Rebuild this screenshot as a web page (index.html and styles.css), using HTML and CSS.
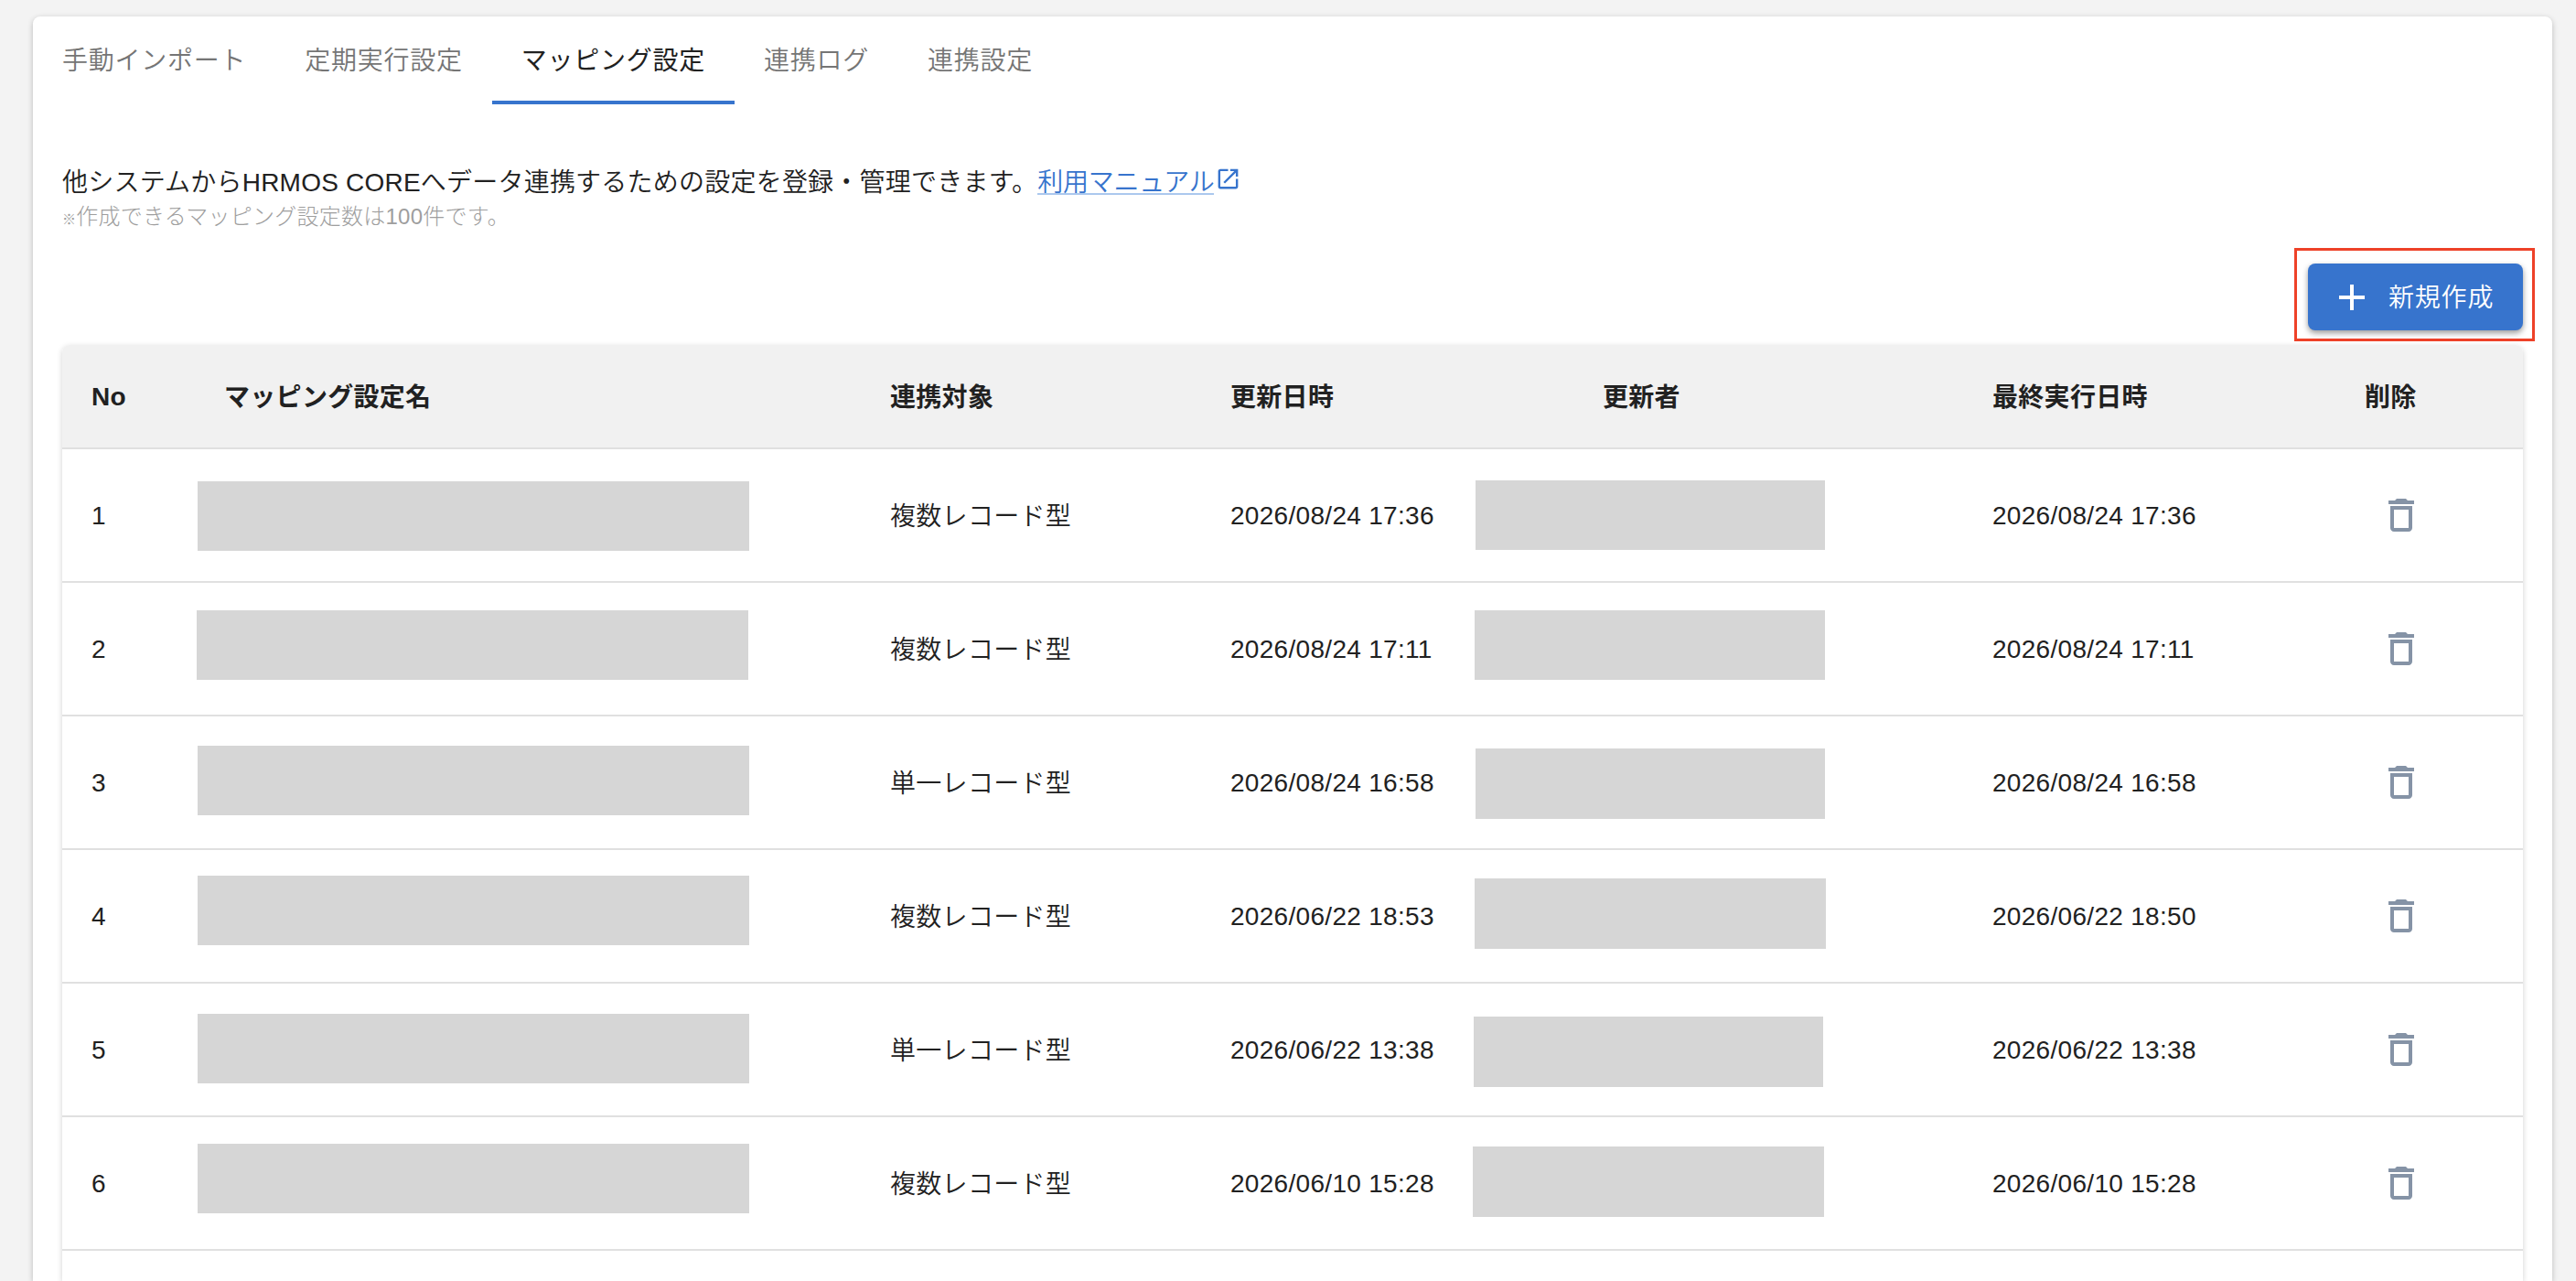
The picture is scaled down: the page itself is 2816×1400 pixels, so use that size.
FILE: index.html
```html
<!DOCTYPE html>
<html lang="ja">
<head>
    <meta charset="UTF-8">
    <meta name="viewport" content="width=device-width, initial-scale=1.0">
    <title>マッピング設定</title>
    <link rel="stylesheet" href="styles.css">
</head>
<body>

    <!-- shared icon shapes -->
    <svg class="icon-defs" width="0" height="0">
        <symbol id="icon-trash" viewBox="0 0 24 24">
            <path d="M6 19c0 1.1.9 2 2 2h8c1.1 0 2-.9 2-2V7H6v12zM8 9h8v10H8V9zm7.5-5l-1-1h-5l-1 1H5v2h14V4z"/>
        </symbol>
    </svg>

    <main class="card">
        <nav class="tabs">
            <a class="tab">手動インポート</a>
            <a class="tab">定期実行設定</a>
            <a class="tab active">マッピング設定</a>
            <a class="tab">連携ログ</a>
            <a class="tab">連携設定</a>
        </nav>

        <div class="content">
            <div class="description">
                <span>他システムからHRMOS COREへデータ連携するための設定を登録・管理できます。</span>
                <a class="manual-link">利用マニュアル</a>
                <svg class="icon-open" viewBox="0 0 24 24">
                    <path d="M19 19H5V5h7V3H5c-1.11 0-2 .9-2 2v14c0 1.1.89 2 2 2h14c1.1 0 2-.9 2-2v-7h-2v7zM14 3v2h3.59l-9.83 9.83 1.41 1.41L19 6.41V10h2V3h-7z"/>
                </svg>
            </div>
            <p class="note"><span class="note-mark">※</span>作成できるマッピング設定数は100件です。</p>

            <div class="actions">
                <div class="highlight">
                    <button class="create-button" type="button">
                        <svg class="icon-plus" viewBox="0 0 24 24">
                            <path d="M19 13h-6v6h-2v-6H5v-2h6V5h2v6h6v2z"/>
                        </svg>
                        <span class="create-label">新規作成</span>
                    </button>
                </div>
            </div>

            <div class="table">
                <div class="row head">
                    <div class="cell num">No</div>
                    <div class="cell title">マッピング設定名</div>
                    <div class="cell">連携対象</div>
                    <div class="cell">更新日時</div>
                    <div class="cell user">更新者</div>
                    <div class="cell">最終実行日時</div>
                    <div class="cell">削除</div>
                </div>
                <div class="row r1">
                    <div class="cell num">1</div>
                    <div class="mask name"></div>
                    <div class="cell">複数レコード型</div>
                    <div class="cell num">2026/08/24 17:36</div>
                    <div class="mask user-mask"></div>
                    <div class="cell num">2026/08/24 17:36</div>
                    <div class="cell delete"><svg class="icon-trash"><use href="#icon-trash"/></svg></div>
                </div>
                <div class="row r2">
                    <div class="cell num">2</div>
                    <div class="mask name"></div>
                    <div class="cell">複数レコード型</div>
                    <div class="cell num">2026/08/24 17:11</div>
                    <div class="mask user-mask"></div>
                    <div class="cell num">2026/08/24 17:11</div>
                    <div class="cell delete"><svg class="icon-trash"><use href="#icon-trash"/></svg></div>
                </div>
                <div class="row r3">
                    <div class="cell num">3</div>
                    <div class="mask name"></div>
                    <div class="cell">単一レコード型</div>
                    <div class="cell num">2026/08/24 16:58</div>
                    <div class="mask user-mask"></div>
                    <div class="cell num">2026/08/24 16:58</div>
                    <div class="cell delete"><svg class="icon-trash"><use href="#icon-trash"/></svg></div>
                </div>
                <div class="row r4">
                    <div class="cell num">4</div>
                    <div class="mask name"></div>
                    <div class="cell">複数レコード型</div>
                    <div class="cell num">2026/06/22 18:53</div>
                    <div class="mask user-mask"></div>
                    <div class="cell num">2026/06/22 18:50</div>
                    <div class="cell delete"><svg class="icon-trash"><use href="#icon-trash"/></svg></div>
                </div>
                <div class="row r5">
                    <div class="cell num">5</div>
                    <div class="mask name"></div>
                    <div class="cell">単一レコード型</div>
                    <div class="cell num">2026/06/22 13:38</div>
                    <div class="mask user-mask"></div>
                    <div class="cell num">2026/06/22 13:38</div>
                    <div class="cell delete"><svg class="icon-trash"><use href="#icon-trash"/></svg></div>
                </div>
                <div class="row r6">
                    <div class="cell num">6</div>
                    <div class="mask name"></div>
                    <div class="cell">複数レコード型</div>
                    <div class="cell num">2026/06/10 15:28</div>
                    <div class="mask user-mask"></div>
                    <div class="cell num">2026/06/10 15:28</div>
                    <div class="cell delete"><svg class="icon-trash"><use href="#icon-trash"/></svg></div>
                </div>
                <div class="row last"></div>
            </div>
        </div>
    </main>

</body>
</html>
```

FILE: styles.css
```css
* {
    box-sizing: border-box;
}

body {
    margin: 0;
    padding: 18px 26px 0 36px;
    height: 100vh;
    overflow: hidden;
    background-color: #f3f3f3;
    font-family: "Liberation Sans", "Noto Sans CJK JP", sans-serif;
    font-size: 28px;
    letter-spacing: 0.3px;
    color: #212121;
}

.icon-defs {
    display: none;
}

.card {
    height: calc(100vh - 18px);
    background-color: #fff;
    border-radius: 8px 8px 0 0;
    box-shadow: 0 2px 6px rgba(0, 0, 0, 0.24);
}

/* Tabs */
.tabs {
    display: flex;
    height: 96px;
}

.tab {
    padding: 29px 32px 0;
    line-height: 40px;
    font-weight: 350;
    letter-spacing: 0.75px;
    color: #757575;
    border-bottom: 4px solid transparent;
}

.tab.active {
    font-weight: 400;
    color: #212121;
    border-bottom-color: #3774cd;
}

/* Description */
.content {
    padding: 64px 32px 0;
}

.description {
    display: flex;
    height: 40px;
    padding-top: 2px;
    line-height: 40px;
    font-weight: 350;
    letter-spacing: 0.22px;
    white-space: nowrap;
}

.manual-link {
    height: 33px;
    color: #3774cd;
    letter-spacing: -0.28px;
    border-bottom: 2px solid #abc8ee;
}

.icon-open {
    width: 29px;
    height: 29px;
    margin-top: 1px;
    margin-left: 1px;
    fill: #3774cd;
}

.note {
    margin: 0;
    height: 38px;
    line-height: 38px;
    font-size: 24px;
    font-weight: 300;
    letter-spacing: 0.26px;
    color: #9e9e9e;
}

.note-mark {
    font-size: 15px;
}

/* Create button */
.actions {
    display: flex;
    justify-content: flex-end;
    margin: 15px -13px 4px 0;
}

.highlight {
    border: 3px solid #ee4128;
    padding: 14px 10px 9px 12px;
}

.create-button {
    display: flex;
    align-items: center;
    width: 235px;
    height: 73px;
    padding: 0 0 0 24px;
    border: none;
    border-radius: 8px;
    background-color: #3774cd;
    color: #fff;
    font-family: inherit;
    font-size: 28px;
    font-weight: 350;
    letter-spacing: 0.8px;
    box-shadow: 0 3px 6px rgba(0, 0, 0, 0.4);
}

.create-label {
    padding-bottom: 4px;
}

.icon-plus {
    width: 48px;
    height: 48px;
    margin-right: 16px;
    fill: #fff;
}

/* Table */
.table {
    border-radius: 8px 8px 0 0;
    box-shadow: 0 2px 6px rgba(0, 0, 0, 0.18);
}

.row {
    display: grid;
    grid-template-columns: 147px 726px 372px 296px 537px 407px 205px;
    align-items: center;
    height: 146px;
    border-bottom: 2px solid #e0e0e0;
}

.row.head {
    height: 114px;
    background-color: #f1f1f1;
    border-radius: 8px 8px 0 0;
}

.row.last {
    height: 33px;
    border-bottom: none;
}

.cell {
    padding-left: 32px;
    padding-bottom: 3px;
    font-weight: 350;
    white-space: nowrap;
}

.cell.num {
    padding-top: 2px;
    padding-bottom: 0;
}

.head .cell {
    font-weight: 700;
}

.cell.title {
    padding-left: 30px;
}

.cell.user {
    padding-left: 143px;
}

.cell.delete {
    display: flex;
    padding-left: 48px;
    padding-bottom: 0;
}

.icon-trash {
    width: 48px;
    height: 48px;
    fill: #8593a6;
}

/* Masked values, hand placed in each row */
.mask {
    align-self: start;
    height: 76px;
    background-color: #d6d6d6;
}

.mask.name {
    width: 603px;
    margin-left: 1px;
}

.mask.user-mask {
    width: 382px;
    margin-left: 4px;
}

.r1 .name { margin-top: 35px; }
.r1 .user-mask { margin-top: 34px; }
.r2 .name { margin-top: 30px; margin-left: 0; }
.r2 .user-mask { margin-top: 30px; margin-left: 3px; width: 383px; }
.r3 .name { margin-top: 32px; }
.r3 .user-mask { margin-top: 35px; height: 77px; }
.r4 .name { margin-top: 28px; }
.r4 .user-mask { margin-top: 31px; margin-left: 3px; width: 384px; height: 77px; }
.r5 .name { margin-top: 33px; }
.r5 .user-mask { margin-top: 36px; margin-left: 2px; height: 77px; }
.r6 .name { margin-top: 29px; }
.r6 .user-mask { margin-top: 32px; margin-left: 1px; width: 384px; height: 77px; }
```
